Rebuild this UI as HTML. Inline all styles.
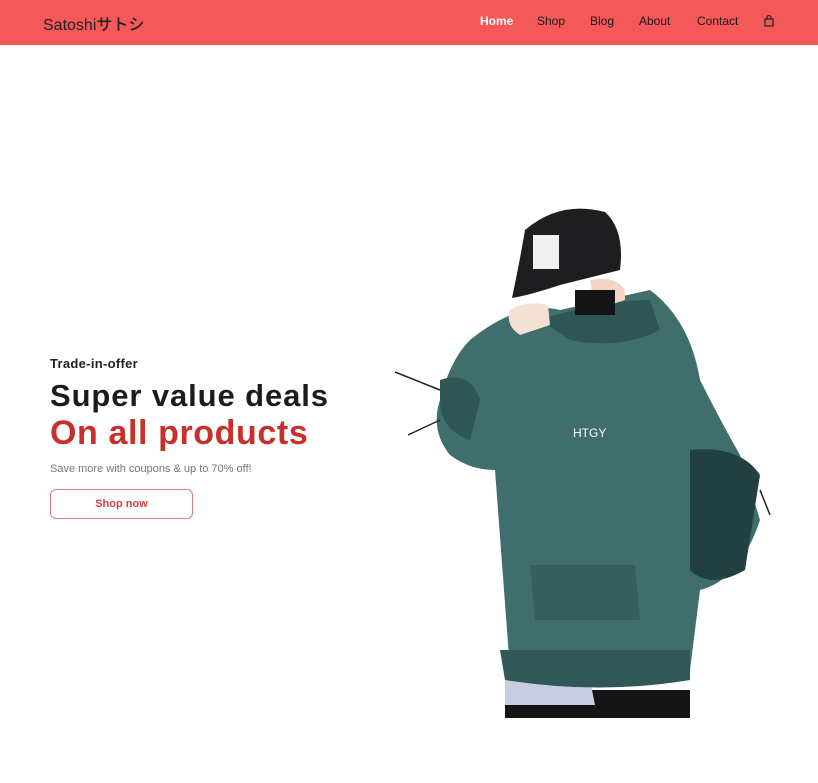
<!DOCTYPE html>
<html><head><meta charset="utf-8"><style>
*{margin:0;padding:0;box-sizing:border-box}
body{width:818px;height:783px;background:#fff;font-family:"Liberation Sans","Noto Sans CJK JP",sans-serif;position:relative;overflow:hidden}
.nav{position:absolute;left:0;top:0;width:818px;height:45px;background:#f55858;box-shadow:0 1px 3px rgba(0,0,0,.08)}
.logo{position:absolute;left:43px;top:11px;font-size:16px;color:#222;font-weight:500}
.nav span{position:absolute;top:14px;font-size:12px;color:#1a1a1a}
.t{position:absolute;left:50px}
</style></head><body>
<div class="nav"><div class="logo">Satoshiサトシ</div>
<span style="left:480px;color:#fff;font-weight:bold">Home</span>
<span style="left:537px">Shop</span>
<span style="left:590px">Blog</span>
<span style="left:639px">About</span>
<span style="left:697px">Contact</span>
<svg style="position:absolute;left:764px;top:15px" width="10" height="12" viewBox="0 0 10 12"><rect x="1" y="4" width="8" height="7" fill="none" stroke="#222" stroke-width="1.2"/><path d="M3 4V2.5a2 2 0 0 1 4 0V4" fill="none" stroke="#222" stroke-width="1.2"/></svg>
</div>
<div class="t" style="top:356px;font-size:13px;font-weight:bold;color:#222;letter-spacing:.3px">Trade-in-offer</div>
<div class="t" style="top:378px;font-size:31px;font-weight:bold;color:#1c1c1c;letter-spacing:.9px">Super value deals</div>
<div class="t" style="top:414px;font-size:34px;font-weight:bold;color:#c8312a;letter-spacing:.6px">On all products</div>
<div class="t" style="top:463px;font-size:11px;color:#777">Save more with coupons &amp; up to 70% off!</div>
<div class="t" style="top:489px;width:143px;height:30px;border:1px solid #e07a7a;border-radius:6px;color:#d04040;font-size:11px;font-weight:bold;text-align:center;line-height:28px">Shop now</div>
<svg style="position:absolute;left:0;top:0" width="818" height="783">
<rect x="505" y="690" width="185" height="28" fill="#151515"/>
<path d="M505 680 L590 680 L595 705 L505 705 Z" fill="#c9cde3"/>
<path d="M470 340 Q520 300 560 310 L650 290 Q690 320 700 380 Q720 420 740 455 L760 520 Q740 580 700 590 L690 670 Q600 690 510 670 L495 470 Q470 470 450 455 Q430 430 440 400 Q450 360 470 340 Z" fill="#3f6e6c"/>
<path d="M500 650 L690 650 L690 680 Q600 695 505 680 Z" fill="#2f5856"/>
<path d="M540 320 Q600 300 650 300 L660 330 Q620 350 570 340 Z" fill="#2e5654"/>
<path d="M690 450 Q740 445 760 475 L745 570 Q710 590 690 570 Z" fill="#22403f"/>
<path d="M440 380 Q470 370 480 400 L470 440 Q440 430 440 400Z" fill="#2e5654"/>
<path d="M530 565 L635 565 L640 620 L535 620 Z" fill="#355f5d"/>
<path d="M395 372 L440 390 M408 435 L440 420" stroke="#222" stroke-width="1.5"/>
<path d="M760 490 L770 515" stroke="#222" stroke-width="1.5"/>
<path d="M525 230 Q560 200 605 212 Q625 230 620 270 L560 285 Q530 295 512 298 Q520 260 525 230 Z" fill="#1e1e20"/>
<rect x="533" y="235" width="26" height="34" fill="#f0f0f0"/>
<path d="M590 280 Q615 275 625 290 L625 300 L595 310 Z" fill="#f2d5c5"/>
<rect x="575" y="290" width="40" height="25" fill="#151515"/>
<path d="M510 310 Q525 300 548 305 L550 325 L520 335 Q505 325 510 310 Z" fill="#f5e0d4"/>
<text x="573" y="437" font-size="12" fill="#fff" font-family="Liberation Sans">HTGY</text>
</svg>
</body></html>
